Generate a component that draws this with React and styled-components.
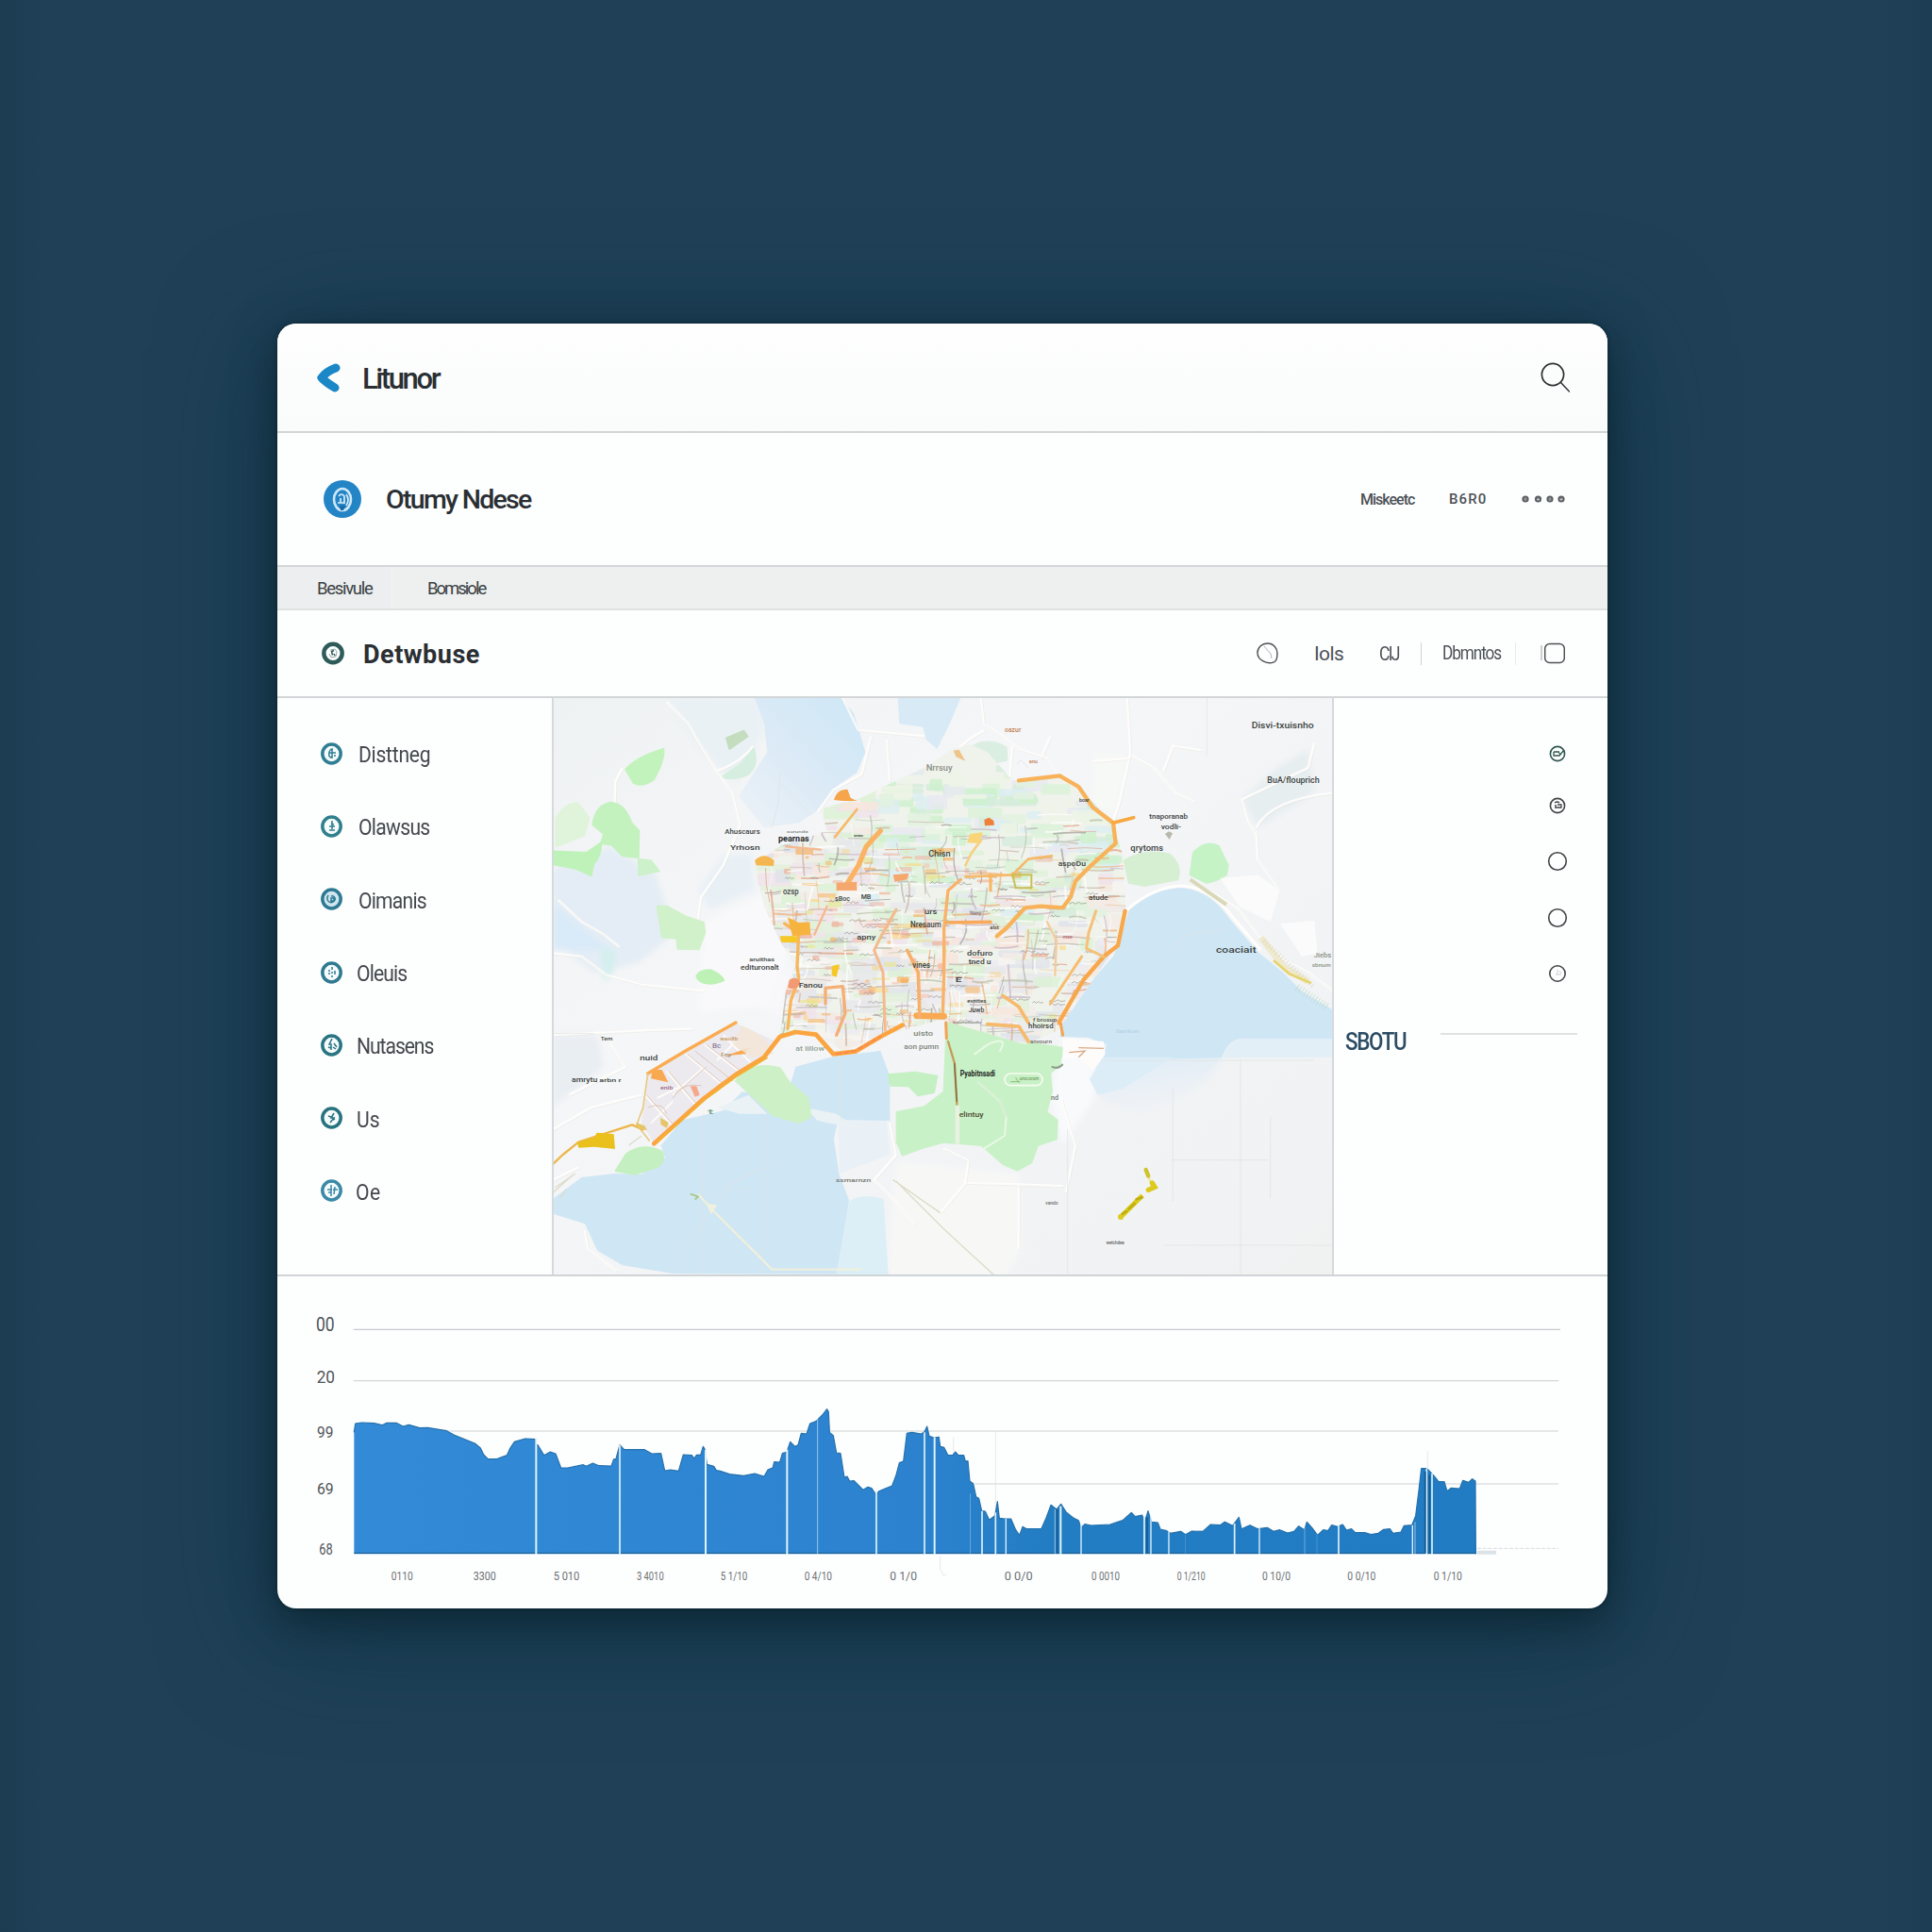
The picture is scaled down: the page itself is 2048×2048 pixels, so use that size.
import React from "react";
import styled, { createGlobalStyle } from "styled-components";

const GlobalStyle = createGlobalStyle`
  * { box-sizing: border-box; }
  body { margin: 0; background: #1f4057; font-family: Roboto, "Liberation Sans", sans-serif; }
`;

const Page = styled.main`
  height: 2048px;
  padding: 343px 344px 343px 294px;
  overflow: hidden;
  background: linear-gradient(90deg, #1b3c51, #1f4057 50px, #1f4057 1990px, #1c3d53);
`;

const Card = styled.article`
  width: 1410px;
  height: 1362px;
  display: flex;
  flex-direction: column;
  border-radius: 20px;
  overflow: hidden;
  background: #fdfefe;
  box-shadow: 0 0 4px rgba(10, 30, 38, 0.7), 0 14px 44px rgba(8, 30, 36, 0.66), 0 20px 120px rgba(8, 46, 66, 0.55);
`;

const Bar = styled.header`
  display: flex;
  align-items: center;
  justify-content: space-between;
  flex: none;
  height: ${(p) => p.$h}px;
  padding: ${(p) => p.$pad};
  background: ${(p) => p.$bg || "#fdfefe"};
  border-bottom: ${(p) => p.$line || "2px solid #d3d6d8"};
`;

const Group = styled.div`
  display: flex;
  align-items: center;
  margin-right: ${(p) => p.$gap || 0}px;
`;

const Title = styled.h1`
  margin: 0 0 0 ${(p) => p.$gap}px;
  padding-top: 3px;
  font-size: ${(p) => p.$size}px;
  font-weight: ${(p) => p.$weight || 500};
  letter-spacing: ${(p) => p.$track || 0}px;
  line-height: 1.2;
  color: #2a2f33;
  white-space: nowrap;
`;

const Action = styled.span`
  display: block;
  width: ${(p) => p.$w}px;
  margin-right: ${(p) => p.$gap || 0}px;
  font-size: ${(p) => p.$size}px;
  font-weight: ${(p) => p.$weight || 400};
  letter-spacing: ${(p) => p.$track || 0}px;
  color: #4c5156;
  white-space: nowrap;
  transform: scaleX(${(p) => p.$squeeze || 1});
  transform-origin: left center;
`;

const Divider = styled.i`
  width: 1px;
  height: 24px;
  margin-right: ${(p) => p.$gap}px;
  background: ${(p) => p.$color};
`;

const Tabs = styled.nav`
  display: flex;
  flex: none;
  height: 46px;
  background: #eef0f0;
  border-bottom: 2px solid #dfe1e2;
`;

const Tab = styled.a`
  display: flex;
  align-items: center;
  width: ${(p) => p.$w}px;
  padding-left: ${(p) => p.$pad}px;
  padding-top: 2px;
  background: ${(p) => (p.$active ? "#eceeef" : "transparent")};
  border-right: ${(p) => (p.$active ? "1px solid #f3f5f5" : "0")};
  font-size: 18.5px;
  letter-spacing: ${(p) => p.$track}px;
  color: #3a3f43;
`;

const Body = styled.section`
  display: flex;
  flex: none;
  height: 613px;
  border-bottom: 2px solid #cfd4d6;
`;

const Sidebar = styled.ul`
  width: 293px;
  margin: 0;
  padding: 20px 0 0 46px;
  list-style: none;
  border-right: 2px solid #d5dadd;
`;

const SideItem = styled.li`
  display: flex;
  align-items: center;
  height: 77.3px;
  font-size: 24px;
  letter-spacing: ${(p) => p.$track || 0}px;
  color: #44494e;
`;

const SideLabel = styled.span`
  margin-left: ${(p) => p.$gap}px;
  padding-top: 3px;
  transform: scaleX(0.88);
  transform-origin: left center;
`;

const MapFrame = styled.div`
  width: 825px;
  height: 611px;
  overflow: hidden;
  svg { display: block; margin-left: -1px; }
`;

const Aside = styled.aside`
  display: flex;
  flex-direction: column;
  flex: 1;
  border-left: 2px solid #d5d9db;
`;

const Checks = styled.div`
  display: flex;
  flex-direction: column;
  align-self: flex-end;
  width: 24px;
  height: 256px;
  margin: 48px 41px 0 0;
`;

const Check = styled.span`
  display: block;
  height: 22px;
  margin-bottom: ${(p) => p.$gap}px;
`;

const Summary = styled.div`
  display: flex;
  align-items: flex-start;
  margin: 45px 32px 0 12px;
  justify-content: space-between;
`;

const Metric = styled.strong`
  font-size: 26px;
  line-height: 30px;
  font-weight: 500;
  letter-spacing: -1.5px;
  color: #2c4c63;
  transform: scaleX(0.86);
  transform-origin: left center;
`;

const Rule = styled.i`
  width: 145px;
  height: 2px;
  margin-top: 6px;
  background: #dfe2e3;
`;

const ChartFrame = styled.section`
  flex: 1;
  min-height: 0;
  svg { display: block; }
`;

/* ---------- icons ---------- */

const BackIcon = () => (
  <svg width="25" height="31" viewBox="0 0 25 31">
    <path d="M20 5 C12 8 8 11 5 15.5 C9 20 14 23 19 26" fill="none" stroke="#1b87c6" strokeWidth="9" strokeLinecap="round" strokeLinejoin="round" />
    <path d="M0 15 L9 8 L9 23 Z" fill="#1b87c6" />
  </svg>
);

const SearchIcon = () => (
  <svg width="32" height="34" viewBox="0 -1 32 34" fill="none" stroke="#2c2f31">
    <circle cx="14" cy="13" r="11.6" strokeWidth="1.7" />
    <path d="M22.5 21.5 L32 31.5" strokeWidth="1.5" />
  </svg>
);

const Badge = () => (
  <svg width="40" height="41" viewBox="0 0 40 41">
    <circle cx="20" cy="20" r="20" fill="#2385c6" />
    <ellipse cx="20" cy="20.500" rx="9" ry="11.500" fill="none" stroke="#cfe8f8" strokeWidth="2.600" />
    <path d="M16 17 q3 -4 6 0 v8 M15 24 h7 M18 19 v5 M24 15 q4 6 0 12" fill="none" stroke="#d8ecf9" strokeWidth="1.700" />
    <path d="M17 27 h6 l-2 5 h-3 z" fill="#176aa6" />
  </svg>
);

const StatusIcon = () => (
  <svg width="24" height="25" viewBox="0 0 24 25">
    <circle cx="12" cy="12.500" r="9.700" fill="#fff" stroke="#2d5b59" strokeWidth="4.400" />
    <path d="M9 9 L14 8 L16 11 L15 16 L10 17 L8 13" fill="none" stroke="#8fa9a6" strokeWidth="1" />
    <path d="M13 9.500 l-2.500 1 1 4 M13 13 l1 2" fill="none" stroke="#2d5b59" strokeWidth="1.600" />
  </svg>
);

const glyphs = [
  "M13 7 C8 6 7 17 12 16 M12 7 v10 M12 11 h4 M14 14 h2 M9 11 h3",
  "M12 6 v9 M9 12 h6 M9 16 h6 M11 9 l3 1",
  "M8 8 C5 13 9 17 13 15 C17 13 15 8 11 9 M11 11 h3 v3 h-3 z",
  "M12 6 v3 M12 11 v2 M12 15 v2 M8 10 h2 M8 13 h2 M15 10 v4",
  "M12 5 l-3 6 h2 v6 M14 10 l3 4 M8 14 l3 1 M13 14 l3 2",
  "M14 7 l-3 5 h3 l-4 5 M8 10 l3 1 M15 13 l-2 1",
  "M11 6 v12 M7 11 h5 M15 8 l-1 8 M13 11 h5 M8 14 h3",
];

const SideIcon = ({ n }) => {
  const tone = ["#2f7f92", "#2f7f8c", "#2d7a92", "#2f7a90", "#2a7583", "#27737f", "#3b89a6"][n];
  return (
    <svg width="23" height="24" viewBox="0 0 23 24">
      <ellipse cx="11.500" cy="12" rx="9.700" ry="9.900" fill={n === 2 ? "#cfe6ee" : "#f6fbfc"} stroke={tone} strokeWidth="3.500" />
      <path d={glyphs[n]} fill="none" stroke={tone} strokeWidth="1.500" />
    </svg>
  );
};

const CircleMark = ({ r, kind }) => (
  <svg width="24" height="22" viewBox="0 0 24 22" fill="none" stroke={kind === "done" ? "#2f5550" : "#3f4446"}>
    <circle cx="12" cy="11" r={r} strokeWidth="1.600" />
    {kind === "done" && <path d="M8 9 h6 M8 9 v4 l6 0 5 -6 M13 9 l2 3" strokeWidth="1.300" />}
    {kind === "part" && <path d="M9 8 q3 -2 5 0 M9 13 h7 v-3 l-4 0 M9 11 l2 0" strokeWidth="1.300" />}
    {kind === "faint" && <path d="M10 12 h6 M12 7 v5 M14 8 l2 3" stroke="#ccd1d3" strokeWidth="1" />}
  </svg>
);

const PinIcon = () => (
  <svg width="23" height="23" viewBox="0 0 23 23" fill="none" stroke="#4b5053">
    <path d="M18.500 20.800 C10 24 1 18 1 11 C1 5 6 1 11.500 1 C18 1 22 6 22 11.500 C22 15 21 20 18.500 20.800 Z" strokeWidth="1.400" />
    <path d="M8 4 L15 12 l1 5" stroke="#a7abae" strokeWidth="0.900" />
  </svg>
);

const BoxIcon = () => (
  <svg width="26" height="23" viewBox="0 0 26 23" fill="none" stroke="#4e5356">
    <rect x="4.700" y="1.500" width="20.600" height="20" rx="5" strokeWidth="1.500" />
    <path d="M1 3 v16" stroke="#9da1a3" strokeWidth="1" />
  </svg>
);

const Dots = () => (
  <svg width="46" height="12" viewBox="0 0 46 12" fill="#c9cccd" stroke="#5a5f62" strokeWidth="2">
    <circle cx="4" cy="6" r="2.600" />
    <circle cx="17.500" cy="6" r="2.600" />
    <circle cx="30" cy="6" r="2.600" />
    <circle cx="42" cy="6" r="2.600" />
    <path d="M2 6 h4 M15.500 5 h4 M28 6 h4 M40 5 h3" strokeWidth="1" />
  </svg>
);

/* ---------- map (three drawing units per pixel) ---------- */

const seeded = (seed) => () => {
  seed = (seed * 16807) % 2147483647;
  return seed / 2147483647;
};

const CITY =
  "M870 380 L1000 345 L1090 300 L1200 250 L1290 190 L1345 175 L1400 200 L1480 290 L1630 280 L1710 330 L1790 420 L1830 520 L1840 690 L1800 830 L1625 1085 L1520 1130 L1250 1050 L1060 1105 L940 1150 L850 1090 L740 1110 L760 950 L790 880 L740 800 L690 690 L655 560 L740 500 L890 450 Z";

const rnd = seeded(4177);
const BLOCKS = Array.from({ length: 620 }, () => {
  const x = 640 + rnd() * 1180;
  const y = 230 + rnd() * 890;
  const green = ["#cdf0cd", "#daf3d8", "#e0f2df", "#dceef0", "#eef4e6", "#d5ecdc", "#e6e9f0"];
  const warm = ["#f3ece6", "#ecebf1", "#f6e6dd", "#e6e8ea", "#efe3ea", "#e2f0da", "#f7f4f1", "#dfe3ea", "#ddf1d6"];
  const set = y < 640 + (rnd() - 0.5) * 300 && x > 1000 ? green : warm;
  return { x, y, w: 30 + rnd() * 90, h: 12 + rnd() * 34, c: set[Math.floor(rnd() * set.length)] };
});
const STREETS = Array.from({ length: 430 }, () => {
  const x = 680 + rnd() * 1120;
  const y = 400 + rnd() * 700;
  const flat = rnd() > 0.3;
  const len = 25 + rnd() * 90;
  const cols = ["#c9b4a6", "#bdb9b4", "#e0a487", "#f0b27c", "#a7a09a", "#ffffff", "#ffffff", "#c8b4c6", "#b9c2a8", "#ffffff"];
  return {
    d: flat
      ? `M${x} ${y} q${len / 2} ${(rnd() - 0.5) * 14} ${len} ${(rnd() - 0.5) * 10}`
      : `M${x} ${y} q${(rnd() - 0.5) * 24} ${len / 2} ${(rnd() - 0.5) * 36} ${len}`,
    c: cols[Math.floor(rnd() * cols.length)],
    w: 1.5 + rnd() * 4.5,
  };
});
const BLOBS = Array.from({ length: 110 }, () => {
  const x = 720 + rnd() * 560 + (rnd() > 0.75 ? 400 : 0);
  const y = 500 + rnd() * 560;
  const cols = ["#f7a94d", "#f5b76b", "#f0a98b", "#fbd77e", "#f2c4ae", "#f4d9a0", "#efb9a8", "#e9e58c"];
  return { x, y, w: 12 + rnd() * 46, h: 6 + rnd() * 15, c: cols[Math.floor(rnd() * cols.length)] };
});
const MARKS = Array.from({ length: 70 }, () => {
  const x = 740 + rnd() * 980;
  const y = 600 + rnd() * 470;
  const w = 18 + rnd() * 40;
  return `M${x} ${y} l${w * 0.2} -5 l${w * 0.15} 6 l${w * 0.2} -6 l${w * 0.15} 5 l${w * 0.3} -2`;
});

const PARKS = [
  ["M250 255 Q285 215 370 190 Q374 225 338 288 Q300 312 275 298 Z", "#c3f3bd"],
  ["M145 430 Q155 365 205 360 Q248 365 268 425 L292 450 L290 535 L240 530 L205 495 L172 490 L180 460 Z", "#c3f2bf"],
  ["M18 515 L125 520 L172 488 Q172 530 148 555 L140 592 L90 570 L18 556 Z", "#bff2b9"],
  ["M28 410 Q60 360 98 362 L134 410 L118 465 L28 500 Z", "#e0f4dc"],
  ["M290 540 L330 545 L356 578 L292 592 Z", "#cdf2cb"],
  ["M350 690 L380 690 L440 722 L498 742 L502 775 L482 827 L415 825 L412 792 L365 788 Z", "#d0f1ca"],
  ["M475 912 Q485 892 520 893 Q552 905 562 925 Q530 940 505 935 Q480 930 475 912 Z", "#bdf1b6"],
  ["M570 155 L625 132 L637 150 L580 190 Z", "#c4ddbf"],
  ["M555 280 L620 235 L655 185 Q676 235 640 270 Q600 290 555 280 Z", "#d5eee0"],
  ["M600 1245 Q650 1180 740 1205 L770 1250 L830 1300 L838 1360 L800 1378 L720 1355 L670 1310 Z", "#cdf0c6"],
  ["M218 1532 L250 1480 Q300 1440 365 1470 Q378 1500 350 1520 L280 1542 Z", "#c4efc0"],
  ["M1085 1226 L1170 1218 L1240 1230 L1230 1282 L1180 1292 L1150 1262 L1092 1260 Z", "#c4f0c3"],
  ["M1112 1345 L1200 1328 L1262 1280 L1275 960 L1340 950 L1395 990 L1390 1060 L1500 1120 L1640 1140 L1630 1195 L1600 1220 L1605 1280 L1588 1345 L1622 1370 L1620 1430 L1560 1450 L1540 1505 L1495 1530 L1450 1510 L1405 1470 L1380 1450 L1260 1440 L1190 1460 L1130 1482 L1112 1440 Z", "#c9f1c7"],
  ["M2045 590 L2055 520 Q2090 480 2135 498 L2165 560 L2160 590 Q2125 612 2095 615 Z", "#c5f3c6"],
  ["M1835 545 Q1900 505 1980 525 Q2020 560 2005 605 L1900 625 L1850 615 Z", "#d6efd2"],
  ["M1345 185 Q1400 150 1460 185 L1462 225 L1390 240 L1340 220 Z", "#dbeee2"],
  ["M1050 350 L1150 300 L1240 250 L1300 260 L1200 330 L1110 390 Z", "#d3efdc"],
];

const ROADS = [
  ["M1500 290 L1630 275 L1690 310 L1735 375 L1800 425 L1808 490 L1730 560 L1680 610 L1665 660 L1640 695 L1570 690 L1520 695 L1460 760 L1430 785", 13, "#f8b25a"],
  ["M1800 425 L1865 408", 11, "#f7a83f"],
  ["M1838 705 L1815 815 L1770 850 L1705 925 L1628 1058", 13, "#f8a74b"],
  ["M1770 850 L1715 825 L1722 775 L1745 705", 9, "#f5c07a"],
  ["M1315 605 L1275 640 L1262 760 L1262 900 L1258 1040", 10, "#f8b26a"],
  ["M1270 742 L1410 740", 11, "#f7aa5b"],
  ["M1330 596 L1480 590 L1530 540 L1605 530", 8, "#f5b96a"],
  ["M1410 640 L1410 590", 9, "#f8b65e"],
  ["M340 1445 L500 1300 L600 1225 L690 1170 L740 1105 L790 1090 L855 1098 L910 1160 L980 1152 L1060 1105 L1130 1068", 14, "#fba541"],
  ["M1175 1038 L1262 1040", 20, "#f9a951"],
  ["M320 1222 L440 1150 L600 1060", 10, "#faab50"],
  ["M320 1222 L305 1330 L285 1385 L325 1435", 5, "#e8c983"],
  ["M18 1510 L50 1480 L100 1440 L270 1385 L305 1400", 7, "#ecb74a"],
  ["M915 470 L985 382", 8, "#f7b96a"],
  ["M1060 450 L1015 500 L990 560 L950 625", 16, "#f9b363"],
  ["M890 690 L850 780 M760 500 L870 510", 7, "#f4b990"],
  ["M755 745 L800 775 L795 880 L800 920 L775 990 L765 1080", 10, "#f6b75f"],
  ["M1110 700 L1062 785 L1040 830 L1068 900 L1075 1085", 9, "#f4ba8d"],
  ["M885 1000 L885 950 L940 945 L948 1030 L920 1100", 10, "#f5af76"],
  ["M1145 830 L1180 900 L1185 1040", 11, "#f7b06c"],
  ["M1400 1065 L1500 1072 L1530 1120 M1450 975 L1500 1010 L1530 1060", 11, "#f7ba6c"],
  ["M1380 480 L1350 520 L1330 560", 8, "#f6cf83"],
  ["M1590 740 L1620 800 L1615 910", 7, "#f4cc9e"],
  ["M1700 850 L1640 940 L1600 1000", 9, "#f6bd70"],
  ["M1640 1100 L1632 1060", 9, "#f6a54c"],
  ["M1268 1060 L1270 1110", 9, "#f5a257"],
];

const PALE_ROADS = [
  "M940 28 L990 130 L1200 150 M1030 150 L1000 270 L910 320 L860 390 M1080 160 L1090 290",
  "M1380 28 L1390 110 L1450 150 L1500 190 L1590 220 L1630 275 M1390 130 L1340 160 L1300 195 M1480 180 L1470 290",
  "M1845 28 L1855 200 L1820 360 L1800 420 M1855 210 L1930 250 L2000 330 L2060 360 M1600 150 L1570 220 M1735 230 L1850 220",
  "M1960 260 L1990 180 L2080 195 M2440 170 L2420 250 L2210 350 L2230 420 L2255 460 L2260 540 L2330 640 M2499 330 Q2300 350 2255 440",
  "M380 40 L450 110 L490 180 L540 260 L590 330 L615 430 L560 560 L490 660 L480 730",
  "M35 670 L110 740 L180 780 L230 820 M18 840 L110 850 L190 910 L300 940 L500 960",
  "M215 360 L218 290 L240 250 M540 260 Q620 230 655 180",
  "M18 1100 L310 1085 L460 1080 M170 1110 L200 1120 L250 1200 L70 1290 M18 1400 L140 1330 L300 1290 M18 1560 L100 1520",
  "M120 1720 L130 1780 L220 1850 M1090 1380 L1110 1480 L1040 1560 L1110 1630 L1170 1700",
  "M1260 1460 L1340 1500 L1330 1570 L1500 1575 L1640 1580 M1330 1570 L1250 1665 M1500 1575 L1500 1780 M1635 1300 L1680 1450 L1650 1600",
  "M2045 610 L2120 650 L2200 700 L2260 780 L2340 860 L2420 900 L2499 960",
];

const HAIRLINES = [
  "M1655 1400 V1865 M1990 1270 V1630 M2205 1180 V1865 M2300 1360 V1620 M1985 1497 H2290 M1960 1768 H2499 M1770 1180 H2440",
  "M498 1350 V1560 L490 1700 L480 1865 M695 1360 V1540 L680 1865 M935 1160 V1370 M2098 28 V210",
  "M740 270 L735 360 L715 440 M740 300 L840 400 M1530 250 Q1500 210 1495 240 M2030 780 L2150 765 M1990 830 Q2000 790 2040 780",
  "M520 1660 L390 1850 M535 1640 L570 1580 L690 1520 L720 1490 M560 1590 H635 M18 1095 H150",
];

const GARDEN_LINES = [
  "M1250 1665 L1100 1560 M1110 1565 L1260 1715 L1420 1862",
  "M260 1450 L300 1420 M20 1600 L80 1545 M25 1585 L90 1540 M40 1620 L60 1590",
];

const PLACES = [
  [565, 461, 112, 19, "Ahuscaurs"], [582, 510, 95, 23, "Yrhosn"], [735, 485, 98, 25, "pearnas", "#1f2a2a", 700],
  [762, 457, 68, 13, "surunda", "#7d8a88"], [643, 866, 80, 18, "aruithas"], [615, 893, 122, 20, "edituronalt"],
  [1205, 260, 84, 27, "Nrrsuy", "#8a8f88"], [1213, 532, 70, 26, "Chisn"], [1155, 757, 98, 26, "Nresaum"],
  [1162, 885, 56, 27, "vines"], [985, 797, 60, 24, "apny"], [750, 652, 50, 26, "ozsp"], [915, 672, 48, 22, "sBoc"],
  [998, 668, 32, 22, "MB"], [1200, 716, 40, 20, "urs"], [800, 948, 76, 19, "Fanou"], [975, 470, 30, 12, "orac"],
  [2240, 125, 198, 29, "Disvi-txuisnho"], [2290, 299, 166, 29, "BuA/flouprich"], [1915, 412, 122, 20, "tnaporanab"],
  [1952, 446, 64, 21, "vodli-"], [1855, 515, 104, 25, "qrytoms"], [1625, 561, 88, 23, "aspoDu"],
  [2127, 839, 128, 25, "coaciait"], [1335, 848, 82, 22, "dofuro"], [1340, 875, 72, 20, "tned u"],
  [2438, 854, 56, 19, "Jiebs", "#8d9286"], [2432, 884, 60, 16, "sbnum", "#8d9286"],
  [1455, 136, 52, 19, "oazur", "#c47f55"], [1532, 235, 28, 16, "anu", "#c47f55"], [1692, 357, 32, 14, "boar"],
  [1722, 669, 62, 20, "atude"], [1408, 763, 28, 15, "alst"], [1345, 717, 36, 14, "Nany", "#857d92"],
  [1640, 793, 30, 14, "mee", "#b06a74"], [1298, 930, 20, 24, "E"],
  [295, 1180, 57, 22, "nuid"], [78, 1249, 82, 20, "amrytu"], [166, 1248, 70, 17, "arbn r"],
  [170, 1116, 38, 14, "Tem"], [790, 1150, 92, 24, "at lillow", "#90a293"], [918, 1566, 112, 17, "ssmarnzn", "#72776f"],
  [1165, 1102, 62, 22, "uisto", "#7d8579"], [1135, 1144, 110, 20, "aon pumn", "#7d8579"], [360, 1274, 40, 17, "enib", "#9a6a84"],
  [525, 1142, 28, 22, "Bc", "#8b7a9c"], [550, 1118, 56, 16, "waollb", "#c9955a"], [553, 1168, 32, 18, "Fny", "#a4885e"],
  [1313, 1230, 112, 25, "Pyabitnsadi", "#1e2622", 700], [1310, 1361, 78, 21, "elintuy", "#4d4a30"],
  [1336, 996, 60, 17, "evnttes"], [1340, 1028, 50, 22, "Juwb"], [1290, 1063, 90, 13, "buunotuudu", "#7d8579"],
  [1530, 1077, 80, 22, "hhoirsd"], [1545, 1057, 76, 17, "f brosup", "#57544d"], [1535, 1127, 70, 14, "anvourn", "#6e6a60"],
  [1502, 1242, 62, 15, "unocorum", "#6f9a5c"], [1585, 1640, 40, 15, "vando", "#6c6f72"], [1778, 1764, 57, 14, "wetchdea", "#55585a"],
  [1810, 1092, 72, 18, "lanlon", "#b4d3e6"], [1602, 1305, 24, 20, "nd", "#6e7770"], [510, 1350, 20, 22, "t", "#7fae93"],
];

const MapView = () => (
  <svg width="827" height="613" viewBox="18 28 2481 1839" fontFamily='Roboto, "Liberation Sans", sans-serif'>
    <defs>
      <linearGradient id="land" x1="0" y1="0" x2="1" y2="1">
        <stop offset="0" stopColor="#eff2f2" />
        <stop offset="0.35" stopColor="#f5f6f8" />
        <stop offset="0.7" stopColor="#f1f3f5" />
        <stop offset="1" stopColor="#f0f2f2" />
      </linearGradient>
      <linearGradient id="lake" x1="1" y1="0" x2="0" y2="1">
        <stop offset="0" stopColor="#cde7f6" />
        <stop offset="0.5" stopColor="#dbeaf6" />
        <stop offset="1" stopColor="#edf2f7" />
      </linearGradient>
      <linearGradient id="fade" x1="0" y1="0" x2="0.3" y2="1">
        <stop offset="0" stopColor="#dbebf5" />
        <stop offset="1" stopColor="#f1f3f6" />
      </linearGradient>
      <clipPath id="city"><path d={CITY} /></clipPath>
      <filter id="soft"><feGaussianBlur stdDeviation="9" /></filter>
    </defs>
    <rect x="18" y="28" width="2481" height="1839" fill="url(#land)" />

    <g filter="url(#soft)">
      <path d="M380 28 L680 28 L690 130 L600 300 L480 180 Z" fill="#eaf1f4" />
      <path d="M18 570 L200 500 L345 590 L375 680 L390 790 L290 870 L150 900 L18 800 Z" fill="#e4edf5" />
      <path d="M18 680 L200 830 L18 830 Z" fill="#d9eaf8" />
      <path d="M170 820 L220 830 L210 900 L180 930 Z" fill="#d3efee" />
      <path d="M560 530 L650 520 L660 640 L520 700 L480 640 Z" fill="#e8f0f6" />
      <path d="M640 1000 L560 900 L700 850 L780 900 L740 1040 Z" fill="#f8f8fa" />
      <path d="M500 740 L700 650 L780 800 L700 1000 L480 1030 Z" fill="#f9f9fb" />
      <path d="M2210 350 L2320 250 L2420 190 L2440 330 L2260 440 Z" fill="#e7eef0" />
      <path d="M1740 200 L1840 210 L1810 400 L1735 370 Z" fill="#f7f9f6" />
      <path d="M18 1100 L160 1100 L180 1200 L18 1330 Z" fill="#e9eef3" />
      <path d="M1110 1500 L1500 1540 L1510 1780 L1460 1865 L1080 1865 Z" fill="#f7f7f6" />
      <path d="M1640 1100 L1780 1120 L1740 1300 L1640 1450 L1600 1300 Z" fill="#f8fafc" />
      <path d="M1720 1130 L2160 1150 L2100 1240 L1900 1360 L1760 1300 Z" fill="url(#fade)" />
    </g>

    <path d="M660 28 L935 28 L975 75 L990 125 L1012 200 L985 265 L925 305 L868 380 L800 425 L690 440 L640 380 L610 340 L700 200 L690 110 Z" fill="url(#lake)" />
    <path d="M1115 28 L1315 28 L1280 110 L1240 190 L1205 160 L1195 120 L1120 110 Z" fill="#d8eaf5" />
    <path d="M1850 702 Q1930 632 2020 632 Q2110 640 2170 730 L2260 835 L2340 900 L2400 960 L2499 1020 L2499 1115 L2200 1112 Q2165 1120 2145 1172 L1770 1180 L1780 1130 L1720 1108 L1630 1105 L1640 1060 L1720 940 L1800 850 L1825 790 Z" fill="#cfe6f5" />
    <path d="M2150 1172 Q2165 1118 2210 1112 L2499 1112 L2499 1170 Z" fill="#e3eff7" />
    <path d="M1770 1170 L1990 1170 L1830 1270 L1750 1290 L1725 1240 Z" fill="#dcedf7" />
    <path d="M18 1620 L110 1552 L215 1540 L300 1542 L375 1490 L362 1450 L430 1370 L560 1340 L620 1280 L760 1300 L790 1200 L910 1168 L1060 1150 L1090 1230 L1090 1372 L925 1370 L912 1430 L928 1540 L960 1625 L945 1720 L920 1860 L400 1858 L240 1832 L160 1785 L120 1700 L18 1668 Z" fill="#cfe6f4" />
    <path d="M960 1628 Q1010 1600 1070 1622 L1085 1862 L920 1862 L945 1720 Z" fill="#dceff6" />
    <path d="M925 1372 L1080 1372 L1090 1480 L930 1540 Z" fill="#e9f1f7" />
    <path d="M540 1330 L640 1290 L700 1350 L610 1350 Z M820 1330 L920 1350 L990 1400 L860 1372 Z" fill="#eaf2f5" />

    {PARKS.map(([d, c]) => <path key={d} d={d} fill={c} stroke={c} strokeWidth="6" strokeLinejoin="round" />)}

    <g fill="none" stroke="#fffefb" strokeLinejoin="round">
      {PALE_ROADS.map((d) => <path key={d} d={d} strokeWidth="8" opacity="0.850" />)}
      {PALE_ROADS.map((d) => <path key={`${d}e`} d={d} stroke="#dcdcd4" strokeWidth="1.300" opacity="0.8" transform="translate(4 4)" />)}
      {HAIRLINES.map((d) => <path key={d} d={d} stroke="#dee4e2" strokeWidth="2.200" />)}
      {GARDEN_LINES.map((d) => <path key={d} d={d} stroke="#dcdcc8" strokeWidth="4" />)}
      <path d="M1840 705 Q1930 625 2020 625 Q2110 630 2180 725 L2270 830" strokeWidth="9" />
      <path d="M2045 605 L2160 685" stroke="#d9d8b8" strokeWidth="12" />
      <path d="M2270 790 L2345 885 L2420 930" stroke="#efe9cd" strokeWidth="20" />
      <path d="M2280 800 L2440 950" stroke="#cfcbb0" strokeWidth="14" strokeDasharray="2 9" opacity="0.700" />
      <path d="M2310 862 L2360 905 L2430 935" stroke="#e6d46e" strokeWidth="8" />
      <path d="M2385 948 L2480 1010" stroke="#bfdccb" strokeWidth="24" strokeDasharray="2 8" />
      <path d="M480 1605 L530 1660 L715 1845 H1000" stroke="#eff0dc" strokeWidth="7" />
      <path d="M505 1635 L540 1640 L522 1670 Z" fill="#f0f1dd" stroke="none" />
      <path d="M455 1605 l25 8 l-10 10" stroke="#a9c98f" strokeWidth="6" />
    </g>

    <path d="M2330 745 L2440 735 L2450 840 L2400 850 Z M2140 600 L2260 590 L2330 640 L2300 740 L2200 690 Z" fill="#fbfbfa" opacity="0.850" />
    <path d="M1640 1110 L1770 1120 L1775 1160 L1735 1215 L1690 1170 L1640 1180 Z" fill="#fdfcfb" />
    <path d="M1690 1140 L1770 1142 M1660 1155 L1710 1150 L1690 1170" stroke="#d9aa85" strokeWidth="4" fill="none" />
    <path d="M1604 1200 Q1625 1210 1640 1192" stroke="#8f9c8b" strokeWidth="6" fill="none" />

    <path d="M320 1225 L600 1062 L730 1120 L700 1170 L600 1225 L340 1445 L300 1380 Z" fill="#eceaee" />
    <g stroke="#fdfbf8" strokeWidth="6" fill="none">
      <path d="M380 1215 L470 1320 M440 1160 L560 1260 M500 1130 L610 1215 M310 1290 L400 1390 M400 1290 L500 1200 M350 1300 L430 1260 M330 1380 L400 1310 M560 1100 L650 1190 M540 1180 L600 1120" />
    </g>
    <g stroke="#d7b7a2" strokeWidth="2" fill="none">
      <path d="M386 1215 L476 1320 M446 1160 L566 1260 M506 1130 L616 1215 M316 1290 L406 1390 M406 1290 L506 1200 M470 1150 L590 1245 M400 1300 q20 -50 90 -40 M320 1330 q50 -20 60 20 M570 1170 L650 1140" />
    </g>
    <path d="M335 1210 L365 1210 L385 1250 L330 1238 Z M570 1165 L635 1142 L632 1160 Z" fill="#f8a851" />
    <path d="M455 1262 l20 0 10 28 -15 6 z" fill="#f5a98a" />
    <path d="M620 1070 Q700 1100 720 1160 L650 1170 L590 1130 Z" fill="#f4e6d4" opacity="0.800" />

    <path d={CITY} fill="#f0f3ec" />
    <g clipPath="url(#city)">
      {BLOCKS.map((b, i) => <rect key={i} x={b.x} y={b.y} width={b.w} height={b.h} rx="7" fill={b.c} opacity="0.820" />)}
      {BLOBS.map((b, i) => <rect key={i} x={b.x} y={b.y} width={b.w} height={b.h} rx="5" fill={b.c} opacity="0.600" />)}
      {STREETS.map((s, i) => <path key={i} d={s.d} stroke={s.c} strokeWidth={s.w} fill="none" opacity="0.750" />)}
      {MARKS.map((d) => <path key={d} d={d} stroke="#8b8680" strokeWidth="2.500" fill="none" opacity="0.700" />)}
    </g>

    <g fill="none" strokeLinejoin="round" strokeLinecap="round">
      {ROADS.map(([d, w, c]) => <path key={d} d={d} strokeWidth={w} stroke={c} />)}
      <path d="M350 1440 L505 1303 L605 1230 L700 1172" stroke="#f0b52f" strokeWidth="4" />
      <path d="M920 1160 L980 1150 L1060 1105" stroke="#fb8d4a" strokeWidth="7" strokeDasharray="14 10" />
      <path d="M1275 1120 L1296 1190 L1303 1320" stroke="#c79b5a" strokeWidth="7" />
      <path d="M1295 1190 L1303 1310" stroke="#7d6a48" strokeWidth="4" />
      <path d="M1305 1330 V1440" stroke="#e8f2e0" strokeWidth="14" />
      <path d="M1370 1250 L1440 1310 L1460 1360 L1455 1420 L1390 1460 M1440 1150 Q1470 1100 1400 1130 L1360 1160" stroke="#e9f8e5" strokeWidth="6" />
      <path d="M1370 1250 L1440 1310 L1460 1360" stroke="#b9d3ae" strokeWidth="1.500" />
      <rect x="1455" y="1222" width="120" height="38" rx="19" stroke="#f6fbf0" strokeWidth="5" />
      <path d="M1475 1248 h28 M1490 1235 l10 15" stroke="#8fba78" strokeWidth="3" />
    </g>
    <path d="M912 352 Q920 318 955 318 L965 345 L985 355 L940 355 Z" fill="#f6a54c" />
    <path d="M660 545 Q690 515 722 545 L720 562 L665 560 Z" fill="#f4b64e" />
    <path d="M765 725 L800 742 L835 740 L838 780 L780 785 Z" fill="#f7b33f" />
    <path d="M740 785 H795 V805 H745 Z M905 880 L930 875 L920 915 L905 910 Z" fill="#f5c828" />
    <path d="M1390 415 L1405 408 L1420 418 L1422 432 L1392 434 Z" fill="#f07f3c" />
    <path d="M1292 195 L1310 192 L1330 228 L1300 215 Z" fill="#efc58a" />
    <path d="M1345 460 L1385 455 L1375 490 L1335 488 Z" fill="#f8d578" />
    <path d="M1100 590 L1150 585 L1145 605 L1105 612 Z M920 615 L985 612 L985 640 L920 640 Z" fill="#f6a76e" />
    <path d="M1480 590 H1540 V632 H1490 Z" fill="none" stroke="#c9bf54" strokeWidth="6" />
    <path d="M95 1440 L150 1425 L158 1410 L212 1415 L216 1462 L150 1455 L100 1458 Z" fill="#e9c01c" />
    <path d="M282 1378 L310 1388 L318 1402 L290 1398 Z M360 1362 L386 1378 L380 1395 L362 1385 Z" fill="#e6c468" />
    <path d="M770 925 Q790 910 805 930 Q800 960 765 950 Z" fill="#f29a74" />
    <path d="M1965 460 l12 -8 12 6 -10 20 z" fill="#b9b8ab" />

    {PLACES.map(([x, y, w, s, t, c, b]) => (
      <text key={`${x}-${y}`} x={x} y={y} textLength={w} lengthAdjust="spacingAndGlyphs" fontSize={s} fontWeight={b || 500} fill={c || "#3c4341"}>{t}</text>
    ))}

    <g fill="none" stroke="#dccb1e" strokeLinecap="round">
      <path d="M1904 1528 L1912 1548" strokeWidth="13" stroke="#cfc32c" />
      <path d="M1914 1556 L1920 1566" strokeWidth="6" stroke="#efe58a" />
      <path d="M1924 1570 L1932 1583 L1912 1592" strokeWidth="16" />
      <path d="M1893 1610 L1824 1678" strokeWidth="15" strokeLinecap="butt" />
      <circle cx="1824" cy="1678" r="4" strokeWidth="10" />
      <path d="M1892 1616 L1874 1622 M1868 1636 L1850 1652 M1842 1660 L1830 1668" strokeWidth="8" stroke="#bfae10" />
    </g>
  </svg>
);

/* ---------- chart (three drawing units per pixel) ---------- */

const PROFILE = [
  [0, [[256, 505], [260, 477], [280, 474], [320, 476], [345, 482], [360, 475], [390, 475], [412, 486], [430, 481], [465, 491], [490, 490], [550, 500], [575, 514], [640, 540], [658, 555], [668, 576], [682, 590], [710, 590], [742, 578], [752, 556], [766, 535], [800, 525], [832, 527], [836, 545], [840, 545], [860, 578], [880, 567], [897, 573], [914, 618], [935, 618], [985, 608], [995, 613], [1015, 603], [1035, 611], [1074, 612], [1082, 590], [1088, 592], [1101, 545], [1115, 560], [1180, 560], [1203, 573], [1232, 572], [1244, 627], [1262, 624], [1288, 628], [1303, 576], [1330, 578], [1338, 588], [1345, 577], [1358, 577], [1366, 550], [1372, 560], [1378, 607], [1400, 613], [1408, 626]]],
  [1410, [[10, 628], [40, 638], [85, 643], [120, 636], [150, 645], [162, 624], [178, 617], [182, 599], [200, 600], [208, 572], [222, 568], [233, 535], [248, 550], [258, 545], [268, 508], [285, 510], [296, 477], [315, 470], [335, 450], [350, 431], [355, 440], [358, 505], [370, 515], [380, 570], [393, 572], [405, 648], [414, 645], [422, 660], [436, 659], [465, 688], [480, 679], [492, 683], [507, 705], [515, 692], [540, 682], [557, 675], [570, 640], [580, 602], [593, 597], [604, 508], [620, 505], [650, 510], [660, 503], [668, 486], [675, 517], [690, 522], [706, 520], [710, 550], [722, 553], [735, 578], [750, 577], [758, 567], [768, 578], [785, 578], [790, 597], [798, 596], [804, 660], [815, 668], [824, 710], [833, 715], [842, 755], [853, 756], [866, 784], [884, 770], [892, 725], [898, 778], [915, 780], [935, 780], [950, 815], [962, 832], [972, 805], [985, 812], [1032, 811], [1047, 777], [1062, 736], [1080, 750], [1094, 733], [1110, 758], [1135, 778], [1150, 785], [1158, 808], [1170, 797], [1190, 801], [1250, 798], [1290, 785], [1318, 760], [1330, 773], [1352, 768], [1360, 790], [1371, 755], [1382, 790], [1402, 792], [1410, 813]]],
  [2820, [[20, 818], [32, 826], [65, 820], [80, 830], [100, 819], [135, 820], [160, 798], [190, 800], [205, 790], [230, 802], [250, 775], [258, 812], [285, 800], [310, 812], [340, 808], [360, 820], [380, 815], [405, 825], [425, 820], [440, 803], [458, 815], [466, 790], [482, 808], [500, 832], [518, 815], [533, 818], [545, 800], [563, 805], [580, 798], [592, 816], [608, 812], [620, 824], [650, 824], [670, 830], [693, 826], [710, 814], [730, 812], [740, 826], [765, 822], [775, 802], [800, 800], [812, 770], [822, 690], [830, 620], [845, 620], [853, 625], [870, 643], [885, 662], [903, 662], [912, 692], [925, 682], [952, 684], [962, 658], [980, 664], [992, 653], [1002, 660]]],
];
const POINTS = PROFILE.flatMap(([shift, pts]) => pts.map(([x, y]) => [x + shift, y]));
const RIDGE = POINTS.map(([x, y]) => `${x} ${y}`).join(" L");

const CUTS = [
  [835, 525, 6], [1101, 545, 5], [1374, 560, 6], [1633, 560, 6], [1730, 460, 3], [1917, 690, 5], [2070, 505, 5], [2102, 520, 6],
  [2215, 700, 2], [2253, 755, 5], [2296, 760, 5], [2329, 780, 4], [2485, 750, 3], [2503, 740, 6], [2568, 795, 4], [2769, 770, 5], [2790, 770, 4],
  [2847, 820, 4], [2900, 830, 1], [3056, 795, 5], [3135, 808, 4], [3279, 800, 2], [3387, 800, 5], [3318, 820, 1], [3622, 800, 4], [3630, 790, 3],
  [3667, 620, 5], [3684, 635, 5],
];

const GRID = [[178, 254, 4092, "#c9cccf"], [341, 254, 4087, "#d5d7d9"], [501, 254, 4086, "#cdd0d2"], [669, 2230, 4086, "#cfd2d4"]];
const Y_LABELS = [[182, 135, 59, "00", 58], [347, 137, 58, "20", 54], [523, 138, 52, "99", 50], [701, 138, 53, "69", 50], [894, 145, 43, "68", 50]];
const X_LABELS = [
  [374, 69, "0110"], [635, 72, "3300"], [890, 83, "5 010"], [1155, 86, "3 4010"], [1421, 86, "5 1/10"], [1688, 88, "0 4/10"], [1960, 86, "0 1/0"],
  [2324, 90, "0 0/0"], [2601, 90, "0 0010"], [2873, 90, "0 1/210"], [3144, 90, "0 10/0"], [3415, 90, "0 0/10"], [3689, 91, "0 1/10"],
];

const Chart = () => (
  <svg width="1410" height="352" viewBox="12 9 4230 1056" fontFamily='Roboto, "Liberation Sans", sans-serif'>
    <defs>
      <linearGradient id="area" x1="0" x2="1" y1="0" y2="0">
        <stop offset="0" stopColor="#338bd8" />
        <stop offset="0.5" stopColor="#2c82cf" />
        <stop offset="0.62" stopColor="#237dc3" />
        <stop offset="1" stopColor="#217cc4" />
      </linearGradient>
    </defs>
    {GRID.map(([y, x1, x2, c]) => <path key={y} d={`M${x1} ${y} H${x2}`} stroke={c} strokeWidth="3.500" />)}
    <path d="M2296 500 V760 M2162 520 V570 M3670 565 V630" stroke="#dde0e1" strokeWidth="2" />
    <path d={`M256 892 L${RIDGE} L3825 892 Z`} fill="url(#area)" />
    <path d={`M${RIDGE} V892`} fill="none" stroke="#2571ab" strokeWidth="3.500" strokeLinejoin="round" />
    <path d="M256 889 H3825" stroke="#1d649c" strokeWidth="4" />
    {CUTS.map(([x, y, w]) => <path key={x} d={`M${x} ${y} V894`} stroke="#dff3fa" strokeWidth={w} opacity={w < 4 ? 0.6 : 1} />)}
    <path d="M2492 750 V888 M3662 630 V888 M3676 640 V888 M2778 775 V888" stroke="#15598f" strokeWidth="5" />
    <path d="M3828 887 H3888" stroke="#dbe3e8" strokeWidth="12" />
    <path d="M3828 874 H4086" stroke="#d8dbdd" strokeWidth="3" strokeDasharray="12 5" />
    <path d="M2120 900 V940 L2132 962 L2140 955" stroke="#e6e8e9" strokeWidth="3" fill="none" />
    {Y_LABELS.map(([y, x, w, t, s]) => (
      <text key={y} x={x} y={y} textLength={w} lengthAdjust="spacingAndGlyphs" fontSize={s} fill="#4f5458">{t}</text>
    ))}
    {X_LABELS.map(([x, w, t]) => (
      <text key={x} x={x} y="974" textLength={w} lengthAdjust="spacingAndGlyphs" fontSize="38" fill="#6b7074">{t}</text>
    ))}
  </svg>
);

/* ---------- page ---------- */

const NAV = [
  ["Disttneg", 17, -0.3], ["Olawsus", 17, -0.8], ["Oimanis", 17, -0.9], ["Oleuis", 15, -1],
  ["Nutasens", 15, -1.2], ["Us", 15, 0], ["Oe", 14, 0.5],
];

const CHECKS = [
  [7.6, 33, "done"], [7.6, 37, "part"], [9.3, 38, "open"], [9.3, 37, "open"], [8.2, 0, "faint"],
];

export default function App() {
  return (
    <Page>
      <GlobalStyle />
      <Card>
        <Bar $h={116} $pad="0 40px 0 42px" $bg="linear-gradient(#fefefe, #fafbfb)">
          <Group>
            <BackIcon />
            <Title $gap={23} $size={31} $weight={500} $track={-2.4}>Litunor</Title>
          </Group>
          <SearchIcon />
        </Bar>
        <Bar $h={142} $pad="0 45px 0 49px">
          <Group>
            <Badge />
            <Title $gap={26} $size={28.5} $track={-1.7}>Otumy Ndese</Title>
          </Group>
          <Group>
            <Action $w={56} $gap={38} $size={16} $weight={500} $track={-1}>Miskeetc</Action>
            <Action $w={40} $gap={37} $size={15} $weight={500} $track={-1.3}>B 6 R 0</Action>
            <Dots />
          </Group>
        </Bar>
        <Tabs>
          <Tab $w={122} $pad={42} $track={-1.3} $active>Besivule</Tab>
          <Tab $w={130} $pad={37} $track={-2}>Bomsiole</Tab>
        </Tabs>
        <Bar $h={93} $pad="0 45px 0 47px">
          <Group>
            <StatusIcon />
            <Title $gap={20} $size={27} $weight={700} $track={0.5}>Detwbuse</Title>
          </Group>
          <Group>
            <Group $gap={38}><PinIcon /></Group>
            <Action $w={32} $gap={37} $size={21} $track={-0.6}>Iols</Action>
            <Action $w={19} $gap={25} $size={20} $track={-2} $squeeze={0.88}>CIJ</Action>
            <Divider $gap={22} $color="#cfd2d4" />
            <Action $w={63} $gap={14} $size={19.5} $track={-1.2} $squeeze={0.88}>Dbmntos</Action>
            <Divider $gap={26} $color="#e8eaeb" />
            <BoxIcon />
          </Group>
        </Bar>
        <Body>
          <Sidebar>
            {NAV.map(([label, gap, track], i) => (
              <SideItem key={label} $track={track}>
                <SideIcon n={i} />
                <SideLabel $gap={gap}>{label}</SideLabel>
              </SideItem>
            ))}
          </Sidebar>
          <MapFrame><MapView /></MapFrame>
          <Aside>
            <Checks>
              {CHECKS.map(([r, gap, kind], i) => (
                <Check key={i} $gap={gap}><CircleMark r={r} kind={kind} /></Check>
              ))}
            </Checks>
            <Summary>
              <Metric>SBOTU</Metric>
              <Rule />
            </Summary>
          </Aside>
        </Body>
        <ChartFrame><Chart /></ChartFrame>
      </Card>
    </Page>
  );
}
